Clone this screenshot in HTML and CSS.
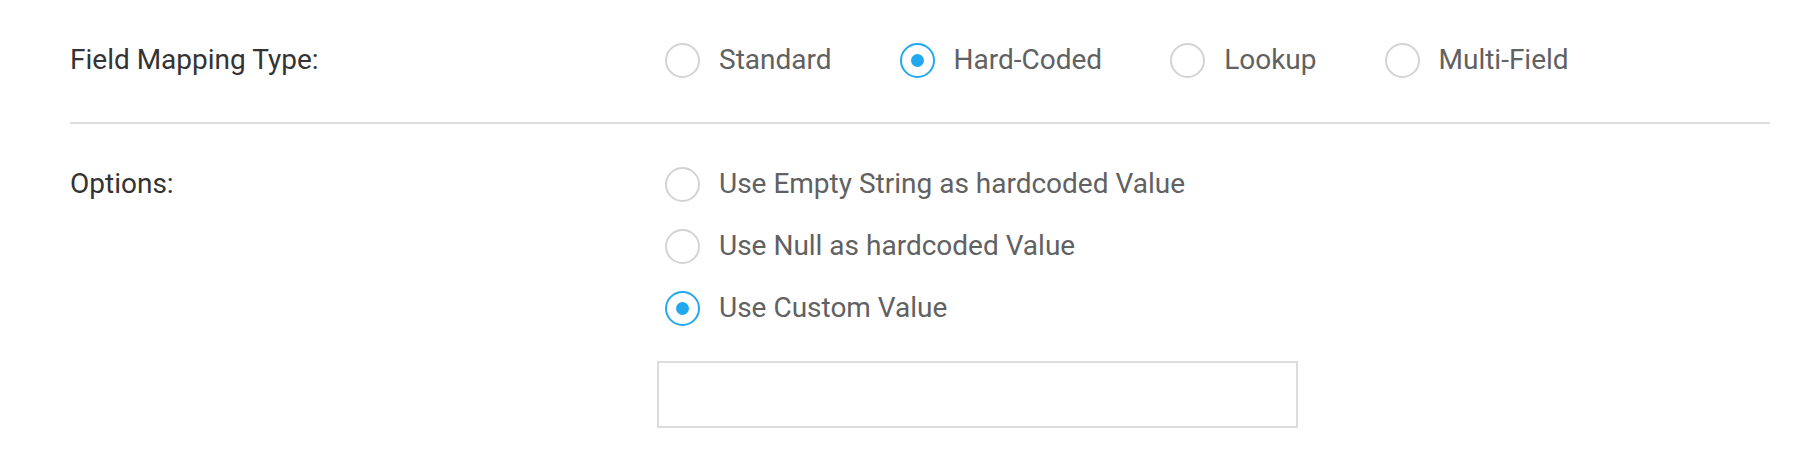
FILE: index.html
```html
<!DOCTYPE html>
<html lang="en">
<head>
<meta charset="utf-8">
<title>Field Mapping</title>
<link rel="stylesheet" href="styles.css">
</head>
<body>
<div class="form">
  <div class="row row-type">
    <div class="label">Field Mapping Type:</div>
    <div class="control inline">
      <label class="radio"><span class="circle"></span><span class="text">Standard</span></label>
      <label class="radio"><span class="circle checked"><span class="dot"></span></span><span class="text">Hard-Coded</span></label>
      <label class="radio"><span class="circle"></span><span class="text">Lookup</span></label>
      <label class="radio"><span class="circle"></span><span class="text">Multi-Field</span></label>
    </div>
  </div>
  <div class="divider"></div>
  <div class="row row-options">
    <div class="label">Options:</div>
    <div class="control stacked">
      <label class="radio"><span class="circle"></span><span class="text">Use Empty String as hardcoded Value</span></label>
      <label class="radio"><span class="circle"></span><span class="text">Use Null as hardcoded Value</span></label>
      <label class="radio"><span class="circle checked"><span class="dot"></span></span><span class="text">Use Custom Value</span></label>
      <div class="input-box"></div>
    </div>
  </div>
</div>
</body>
</html>
```

FILE: styles.css
```css
html, body {
  margin: 0;
  padding: 0;
  background: #ffffff;
}

body {
  font-family: Roboto, "Liberation Sans", Arial, sans-serif;
  font-size: 28px;
  line-height: 42px;
  color: #333333;
}

.form {
  padding: 0 30px 0 70px;
}

.row {
  display: grid;
  grid-template-columns: 587px 1fr;
}

.row-type {
  padding: 39px 0 41px;
}

.row-options {
  padding: 39px 0 0;
}

.label {
  color: #333333;
  height: 42px;
  display: flex;
  align-items: center;
}

.control.inline {
  display: flex;
  align-items: center;
  gap: 60px;
}

.control.stacked {
  display: flex;
  flex-direction: column;
  align-items: flex-start;
  gap: 20px;
}

.radio {
  display: flex;
  align-items: center;
  gap: 19px;
  padding-left: 8px;
  height: 42px;
  color: #616161;
  cursor: pointer;
}

.circle {
  width: 35px;
  height: 35px;
  box-sizing: border-box;
  border: 2px solid #d3d3d3;
  border-radius: 50%;
  display: flex;
  align-items: center;
  justify-content: center;
  flex: none;
}

.circle.checked {
  border-color: #22a8ef;
}

.dot {
  width: 13px;
  height: 13px;
  border-radius: 50%;
  background: #22a8ef;
}

.divider {
  height: 2px;
  background: #dddddd;
}

.input-box {
  margin-top: 12px;
  width: 641px;
  height: 67px;
  box-sizing: border-box;
  border: 2px solid #dcdcdc;
  background: #ffffff;
}
```
